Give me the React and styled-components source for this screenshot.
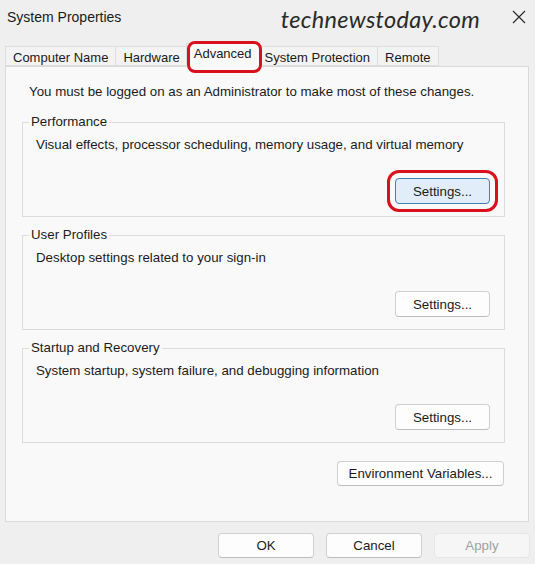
import styled, { createGlobalStyle } from 'styled-components'

const Global = createGlobalStyle`
    html, body {
        margin: 0;
        padding: 0;
        background: #efefef;
    }
    body {
        font-family: "Liberation Sans", Arial, sans-serif;
        color: #1b1b1b;
    }
`

const tabs = ['Computer Name', 'Hardware', 'Advanced', 'System Protection', 'Remote']

const groups = [
    { title: 'Performance', text: 'Visual effects, processor scheduling, memory usage, and virtual memory', marked: true },
    { title: 'User Profiles', text: 'Desktop settings related to your sign-in' },
    { title: 'Startup and Recovery', text: 'System startup, system failure, and debugging information' },
]

const CloseIcon = () => (
    <svg width="14" height="14" viewBox="0 0 14 14">
        <path d="M1 1 L13 13 M13 1 L1 13" stroke="#2b2b2b" strokeWidth="1.2" fill="none" />
    </svg>
)

const App = () => {
    return (
        <Window>
            <Global />
            <TitleBar>
                <Title>System Properties</Title>
                <Watermark>technewstoday.com</Watermark>
                <Close><CloseIcon /></Close>
            </TitleBar>

            <TabStrip>
                {tabs.map(tab => (
                    <Tab key={tab} $active={tab === 'Advanced'}>{tab}</Tab>
                ))}
            </TabStrip>

            <Panel>
                <Notice>You must be logged on as an Administrator to make most of these changes.</Notice>

                {groups.map(group => (
                    <Group key={group.title}>
                        <Legend>{group.title}</Legend>
                        <GroupBody>
                            <Description>{group.text}</Description>
                            <ButtonRow>
                                <Button $focused={group.marked}>Settings...</Button>
                            </ButtonRow>
                        </GroupBody>
                    </Group>
                ))}

                <EnvRow>
                    <Button $wide>Environment Variables...</Button>
                </EnvRow>
            </Panel>

            <Footer>
                <Button $footer>OK</Button>
                <Button $footer>Cancel</Button>
                <Button $footer $disabled>Apply</Button>
            </Footer>
        </Window>
    )
}

const Window = styled.div`
    width: 535px;
    height: 564px;
    display: flex;
    flex-direction: column;
    background: #efefef;
    overflow: hidden;
`

const TitleBar = styled.div`
    height: 42px;
    display: flex;
    align-items: flex-start;
    padding: 0 9px 0 7px;
    box-sizing: border-box;
`

const Title = styled.div`
    margin-top: 9px;
    font-size: 14px;
    line-height: 16px;
    color: #1a1a1a;
`

const Watermark = styled.div`
    margin-left: auto;
    margin-top: 5px;
    font-family: Lato, "Open Sans", sans-serif;
    font-style: italic;
    font-size: 23.5px;
    line-height: 28px;
    color: #2a2a2a;
    letter-spacing: 0.3px;
`

const Close = styled.div`
    margin-left: 32px;
    margin-top: 10px;
    width: 14px;
    height: 14px;
    display: flex;
`

const TabStrip = styled.div`
    height: 24px;
    display: flex;
    align-items: flex-end;
    padding-left: 6px;
`

const Tab = styled.div`
    position: relative;
    box-sizing: border-box;
    height: ${p => p.$active ? '24px' : '20px'};
    padding: ${p => p.$active ? '2px 7px 0 7px' : '3px 7px 0 7px'};
    margin: ${p => p.$active ? '0 -2px -1px -2px' : '0 0 0 -1px'};
    z-index: ${p => p.$active ? 1 : 0};
    font-size: 13px;
    line-height: 16px;
    background: ${p => p.$active ? '#f9f9f9' : '#f3f3f3'};
    border: 1px solid #dedede;
    border-bottom: ${p => p.$active ? 'none' : '1px solid #dedede'};
    color: #1a1a1a;

    &::after {
        content: '';
        display: ${p => p.$active ? 'block' : 'none'};
        position: absolute;
        top: -3px;
        bottom: -6px;
        left: 0;
        right: -3px;
        border: 3px solid #d8111c;
        border-radius: 8px;
    }
`

const Panel = styled.div`
    height: 456px;
    box-sizing: border-box;
    margin: 0 6px 0 5px;
    padding: 17px 23px 0 16px;
    background: #f9f9f9;
    border: 1px solid #dadada;
    display: flex;
    flex-direction: column;
`

const Notice = styled.div`
    margin-left: 7px;
    font-size: 13.3px;
    line-height: 16px;
    margin-bottom: 14px;
`

const Group = styled.fieldset`
    margin: 0 0 10px 0;
    padding: 0;
    min-inline-size: 0;
    border: 1px solid #dcdcdc;
`

const Legend = styled.legend`
    margin-left: 6px;
    padding: 0 2px;
    font-size: 13.3px;
    line-height: 16px;
`

const GroupBody = styled.div`
    display: flex;
    flex-direction: column;
    padding: 7px 14px 12px 13px;
`

const Description = styled.div`
    font-size: 13.3px;
    line-height: 16px;
`

const ButtonRow = styled.div`
    display: flex;
    justify-content: flex-end;
    margin-top: 25px;
`

const EnvRow = styled.div`
    display: flex;
    justify-content: flex-end;
    margin-top: 8px;
    padding-right: 1px;
`

const Button = styled.button`
    box-sizing: border-box;
    width: ${p => p.$wide ? '167px' : p.$footer ? '96px' : '95px'};
    height: ${p => p.$footer || p.$wide ? '25px' : '26px'};
    padding: 0;
    font-family: "Liberation Sans", Arial, sans-serif;
    font-size: 13.3px;
    color: ${p => p.$disabled ? '#a0a0a0' : '#1b1b1b'};
    background: ${p => p.$focused ? '#e1eefa' : p.$disabled ? '#f6f6f6' : '#fdfdfd'};
    border: 1px solid ${p => p.$focused ? '#3f80b4' : p.$disabled ? '#e6e6e6' : '#d0d0d0'};
    border-bottom-color: ${p => p.$focused ? '#3f80b4' : p.$disabled ? '#e6e6e6' : '#bdbdbd'};
    border-radius: 4px;
    outline: ${p => p.$focused ? '3px solid #d8111c' : 'none'};
    outline-offset: 5px;
`

const Footer = styled.div`
    display: flex;
    justify-content: flex-end;
    gap: 12px;
    padding: 11px 5px 0 0;
`

export default App
